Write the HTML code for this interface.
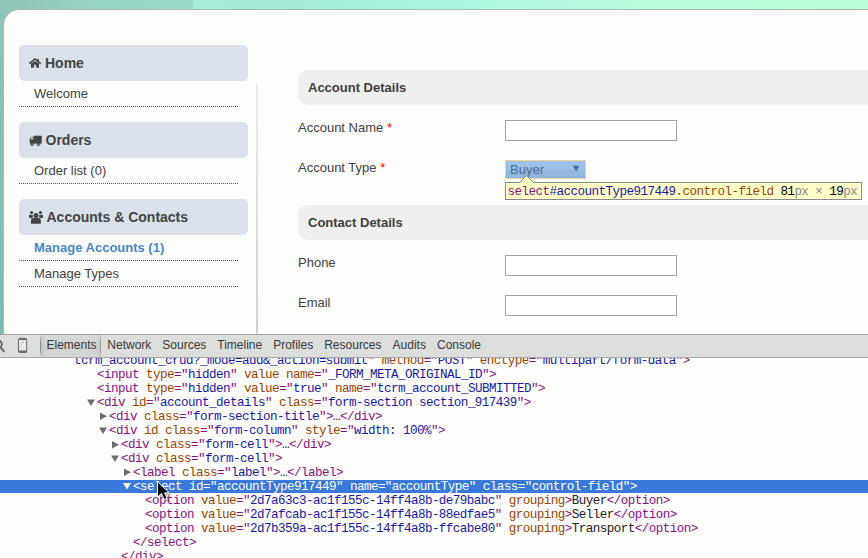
<!DOCTYPE html>
<html><head><meta charset="utf-8">
<style>
*{margin:0;padding:0;box-sizing:border-box}
html,body{width:868px;height:558px;overflow:hidden}
body{position:relative;font-family:"Liberation Sans",sans-serif;background:linear-gradient(90deg,#8dc3b7 0px,#8fc6b9 24px,#92cfc1 60px,#96d6c5 110px,#99dbc8 192px,#a6ecda 194px,#a3e9d8 280px,#a7f0dd 370px,#aaf4e1 434px,#b0f7df 530px,#b7fbdc 651px,#baffd9 868px)}
.abs{position:absolute}
#panel{position:absolute;left:3px;top:9px;width:900px;height:600px;background:#fdfdfb;border:1px solid #b4b6b2;border-radius:16px}
.sbox{position:absolute;left:19px;width:229px;height:36px;background:#dae1ea;border-radius:5px}
.sh{position:absolute;font-weight:bold;font-size:14px;color:#444;white-space:nowrap;line-height:14px}
.si{position:absolute;left:34px;font-size:13px;color:#424242;white-space:nowrap;line-height:13px}
.dot{position:absolute;left:19px;width:219px;height:0;border-top:1px dotted #555}
.sec{position:absolute;left:298px;width:600px;height:35px;background:#eeefee;border-radius:10px}
.st{position:absolute;left:308px;font-weight:bold;font-size:13px;color:#404040;line-height:13px;white-space:nowrap}
.lbl{position:absolute;left:298px;font-size:13px;color:#424242;line-height:13px;white-space:nowrap}
.req{color:#f00}
.inp{position:absolute;left:505px;width:172px;height:21px;border:1px solid #a3a3a3;background:#fff}
#tb{position:absolute;left:0;top:334px;width:868px;height:24px;background:#dcdedc;border-top:1px solid #a3a3a3;border-bottom:1px solid #a8a8a8}
.tab{position:absolute;z-index:2;top:339px;font-size:12px;line-height:12px;color:#383838;white-space:nowrap}
#code{position:absolute;left:-1px;top:358px;width:869px;height:200px;background:#fdfdfc;overflow:hidden;font-family:"Liberation Mono",monospace;font-size:12.6px;letter-spacing:-0.561px}
.ln{position:absolute;white-space:pre;line-height:14px;height:14px;color:#222}
.t{color:#881280}.a{color:#994500}.v{color:#1a1aa6}
.tri{position:absolute;width:0;height:0}
</style></head><body>
<div class="abs" style="left:0;top:9px;width:4px;height:326px;background:linear-gradient(#8dc4b8,#88bfb5 40%,#80b8b0)"></div>
<div id="panel"></div>

<!-- sidebar -->
<div class="sbox" style="top:45px"></div>
<div class="sh" style="left:45px;top:56px">Home</div>
<div class="si" style="top:87px">Welcome</div>
<div class="dot" style="top:106px"></div>

<div class="sbox" style="top:122px"></div>
<div class="sh" style="left:45.5px;top:133px">Orders</div>
<div class="si" style="top:164px">Order list (0)</div>
<div class="dot" style="top:183px"></div>

<div class="sbox" style="top:199px"></div>
<div class="sh" style="left:46.5px;top:210px">Accounts &amp; Contacts</div>
<div class="si" style="top:241px;font-weight:bold;color:#4a87c2">Manage Accounts (1)</div>
<div class="dot" style="top:260px"></div>
<div class="si" style="top:267px">Manage Types</div>
<div class="dot" style="top:286px"></div>

<div class="abs" style="left:256px;top:84px;width:2px;height:250px;background:linear-gradient(#ececec,#d0d0d0)"></div>

<!-- form -->
<div class="sec" style="top:70px"></div>
<div class="st" style="top:81px">Account Details</div>
<div class="lbl" style="top:121px">Account Name <span class="req">*</span></div>
<div class="inp" style="top:120px"></div>
<div class="lbl" style="top:161px">Account Type <span class="req">*</span></div>

<div class="sec" style="top:205px"></div>
<div class="st" style="top:216px">Contact Details</div>
<div class="lbl" style="top:256px">Phone</div>
<div class="inp" style="top:255px"></div>
<div class="lbl" style="top:296px">Email</div>
<div class="inp" style="top:295px"></div>

<!-- devtools toolbar -->
<div id="tb"></div>
<div class="tab" style="left:46.5px">Elements</div>
<div class="tab" style="left:107.3px">Network</div>
<div class="tab" style="left:162.3px">Sources</div>
<div class="tab" style="left:217.3px">Timeline</div>
<div class="tab" style="left:273.2px">Profiles</div>
<div class="tab" style="left:324.2px">Resources</div>
<div class="tab" style="left:392.6px">Audits</div>
<div class="tab" style="left:437px">Console</div>

<div id="code">
<div class="ln" style="left:75px;top:-4px"><span class="v">tcrm_account_crud?_mode=add&amp;_action=submit</span><span class="t">"</span> <span class="a">method</span><span class="t">="</span><span class="v">POST</span><span class="t">"</span> <span class="a">enctype</span><span class="t">="</span><span class="v">multipart/form-data</span><span class="t">"&gt;</span></div>
<div class="ln" style="left:98px;top:10px"><span class="t">&lt;input</span> <span class="a">type</span><span class="t">="</span><span class="v">hidden</span><span class="t">"</span> <span class="a">value</span> <span class="a">name</span><span class="t">="</span><span class="v">_FORM_META_ORIGINAL_ID</span><span class="t">"&gt;</span></div>
<div class="ln" style="left:98px;top:24px"><span class="t">&lt;input</span> <span class="a">type</span><span class="t">="</span><span class="v">hidden</span><span class="t">"</span> <span class="a">value</span><span class="t">="</span><span class="v">true</span><span class="t">"</span> <span class="a">name</span><span class="t">="</span><span class="v">tcrm_account_SUBMITTED</span><span class="t">"&gt;</span></div>
<div class="ln" style="left:98px;top:38px"><span class="t">&lt;div</span> <span class="a">id</span><span class="t">="</span><span class="v">account_details</span><span class="t">"</span> <span class="a">class</span><span class="t">="</span><span class="v">form-section section_917439</span><span class="t">"&gt;</span></div>
<div class="ln" style="left:110px;top:52px"><span class="t">&lt;div</span> <span class="a">class</span><span class="t">="</span><span class="v">form-section-title</span><span class="t">"&gt;</span>…<span class="t">&lt;/div&gt;</span></div>
<div class="ln" style="left:110px;top:66px"><span class="t">&lt;div</span> <span class="a">id</span> <span class="a">class</span><span class="t">="</span><span class="v">form-column</span><span class="t">"</span> <span class="a">style</span><span class="t">="</span><span class="v">width: 100%</span><span class="t">"&gt;</span></div>
<div class="ln" style="left:122px;top:80px"><span class="t">&lt;div</span> <span class="a">class</span><span class="t">="</span><span class="v">form-cell</span><span class="t">"&gt;</span>…<span class="t">&lt;/div&gt;</span></div>
<div class="ln" style="left:122px;top:94px"><span class="t">&lt;div</span> <span class="a">class</span><span class="t">="</span><span class="v">form-cell</span><span class="t">"&gt;</span></div>
<div class="ln" style="left:134px;top:108px"><span class="t">&lt;label</span> <span class="a">class</span><span class="t">="</span><span class="v">label</span><span class="t">"&gt;</span>…<span class="t">&lt;/label&gt;</span></div>
<div class="abs" style="left:0;top:122px;width:869px;height:13px;background:#3879d9"></div>
<div class="ln" style="left:134px;top:122px;color:#fff">&lt;select id="accountType917449" name="accountType" class="control-field"&gt;</div>
<div class="ln" style="left:146px;top:136px"><span class="t">&lt;option</span> <span class="a">value</span><span class="t">="</span><span class="v">2d7a63c3-ac1f155c-14ff4a8b-de79babc</span><span class="t">"</span> <span class="a">grouping</span><span class="t">&gt;</span>Buyer<span class="t">&lt;/option&gt;</span></div>
<div class="ln" style="left:146px;top:150px"><span class="t">&lt;option</span> <span class="a">value</span><span class="t">="</span><span class="v">2d7afcab-ac1f155c-14ff4a8b-88edfae5</span><span class="t">"</span> <span class="a">grouping</span><span class="t">&gt;</span>Seller<span class="t">&lt;/option&gt;</span></div>
<div class="ln" style="left:146px;top:164px"><span class="t">&lt;option</span> <span class="a">value</span><span class="t">="</span><span class="v">2d7b359a-ac1f155c-14ff4a8b-ffcabe80</span><span class="t">"</span> <span class="a">grouping</span><span class="t">&gt;</span>Transport<span class="t">&lt;/option&gt;</span></div>
<div class="ln" style="left:134px;top:178px"><span class="t">&lt;/select&gt;</span></div>
<div class="ln" style="left:122px;top:192px"><span class="t">&lt;/div&gt;</span></div>
</div>

<svg class="abs" style="left:0;top:0" width="868" height="558">
<polygon points="87,399.5 95,399.5 91,406" fill="#6e6e6e"/>
<polygon points="100,412.5 107,416.25 100,420" fill="#6e6e6e"/>
<polygon points="99,427.5 107,427.5 103,434" fill="#6e6e6e"/>
<polygon points="112,441 119,444.75 112,448.5" fill="#6e6e6e"/>
<polygon points="111,455.5 119,455.5 115,462" fill="#6e6e6e"/>
<polygon points="124,468.5 131,472.25 124,476" fill="#6e6e6e"/>
<polygon points="123,483 131,483 127,489.5" fill="#fff"/>
</svg>

<!-- toolbar extras -->
<div class="abs" style="left:41px;top:335px;width:60px;height:22px;background:linear-gradient(90deg,rgba(0,0,0,0.07),rgba(0,0,0,0) 5px,rgba(0,0,0,0) 55px,rgba(0,0,0,0.06)),linear-gradient(#d8dad9,#d1d3d2 60%,#d5d7d6)"></div>
<div class="abs" style="left:40px;top:336px;width:1px;height:20px;background:linear-gradient(rgba(120,120,120,0.2),#8a8a8a 30%,#8a8a8a 70%,rgba(120,120,120,0.2))"></div>
<div class="abs" style="left:100px;top:336px;width:1px;height:20px;background:linear-gradient(rgba(120,120,120,0.2),#9a9a9a 30%,#9a9a9a 70%,rgba(120,120,120,0.2))"></div>
<svg class="abs" style="left:0;top:334px" width="44" height="24">
<circle cx="-2" cy="10.2" r="3.8" fill="none" stroke="#666" stroke-width="1.9"/>
<line x1="0.8" y1="13.6" x2="4.4" y2="17.8" stroke="#666" stroke-width="2"/>
<rect x="18.5" y="4.3" width="8.2" height="14.2" rx="1.8" fill="#e8e9e8" stroke="#6a6a6a" stroke-width="1"/>
<rect x="18.3" y="4.2" width="8.6" height="1.9" rx="1" fill="#6a6a6a"/>
<rect x="18.3" y="16.5" width="8.6" height="2.2" rx="1" fill="#6a6a6a"/>
<line x1="20.2" y1="12.5" x2="23.5" y2="7" stroke="#8aa0b0" stroke-width="0.7" stroke-dasharray="1 1"/>
<line x1="22" y1="9.5" x2="23.8" y2="7" stroke="#8aa0b0" stroke-width="0.7" stroke-dasharray="1 1"/>
</svg>

<!-- sidebar icons -->
<svg class="abs" style="left:0;top:0" width="260" height="260">
<g fill="#444">
<path d="M29.2 63.6 L35 58.9 L40.8 63.6" fill="none" stroke="#444" stroke-width="1.5"/>
<rect x="37.3" y="58.9" width="1.6" height="2.6"/>
<path d="M31 63.4 L35 61 L39 63.4 V67.8 H36.1 V64.7 H33.9 V67.8 H31 Z"/>
<path d="M34 135.7 H41.8 V143.6 H34 Z"/>
<path d="M29.7 139.2 L31.6 136.8 H34 V143.6 H29.7 Z"/>
<rect x="31" y="137.6" width="2.2" height="1.9" fill="#dae1ea"/>
<circle cx="32.1" cy="144.3" r="1.7"/>
<circle cx="38.4" cy="144.3" r="1.7"/>
<circle cx="32.1" cy="144.3" r="0.6" fill="#dae1ea"/>
<circle cx="38.4" cy="144.3" r="0.6" fill="#dae1ea"/>
<circle cx="36" cy="215.4" r="2.5"/>
<circle cx="31.6" cy="212.5" r="1.6"/>
<circle cx="40.4" cy="212.5" r="1.6"/>
<rect x="28.9" y="214.8" width="3.9" height="3.3" rx="1.3"/>
<rect x="39.2" y="214.8" width="3.9" height="3.3" rx="1.3"/>
<path d="M31 220.3 Q31 218.1 33 218.1 H38.8 Q40.8 218.1 40.8 220.3 V223.8 H31 Z"/>
</g>
</svg>

<!-- select overlay -->
<div class="abs" style="left:505px;top:160px;width:81px;height:19px;border:1px solid #ecd39a;background:linear-gradient(#9fc2e8,#9bbee6 50%,#93b8e0 50%,#90b6df)"></div>
<div class="abs" style="left:510px;top:163px;font-size:13px;line-height:13px;color:#4f6e94;white-space:nowrap">Buyer</div>
<svg class="abs" style="left:570px;top:163px" width="12" height="12"><polygon points="3,2.8 9.2,2.8 6.1,8.6" fill="#3e6b98"/></svg>

<!-- tooltip -->
<svg class="abs" style="left:505px;top:174px" width="40" height="10">
<polygon points="14.5,8.5 21.5,1.5 28.5,8.5" fill="#ffffc8" stroke="#888" stroke-width="1"/>
</svg>
<div class="abs" style="left:505px;top:182px;width:357px;height:18px;background:#ffffc8;border:1px solid #8a8a8a;border-top-color:#888"></div>
<svg class="abs" style="left:515px;top:182px" width="30" height="3"><rect x="4.7" y="0" width="13.5" height="1.2" fill="#ffffc8"/></svg>
<div class="abs" style="left:507.5px;top:185px;font-family:'Liberation Mono',monospace;font-size:12.6px;letter-spacing:-0.561px;line-height:14px;white-space:pre;color:#222"><span style="color:#881280">select</span><span style="color:#1a1aa6">#accountType917449</span><span style="color:#994500">.control-field</span> <span style="color:#000">81</span><span style="color:#888">px × </span><span style="color:#000">19</span><span style="color:#888">px</span></div>

<!-- cursor -->
<svg class="abs" style="left:152px;top:477px" width="24" height="26">
<path d="M7 6 L7 21.5 L11 18 L13.8 24 L16.5 22.8 L13.9 17.3 L18.5 17.3 Z" fill="rgba(0,0,0,0.25)" transform="translate(1,1)"/>
<path d="M5.5 4.5 L5.5 20 L9.5 16.5 L12.3 22.5 L15 21.3 L12.4 15.8 L17 15.8 Z" fill="#000" stroke="#fff" stroke-width="0.9" stroke-linejoin="miter"/>
</svg>
</body></html>
